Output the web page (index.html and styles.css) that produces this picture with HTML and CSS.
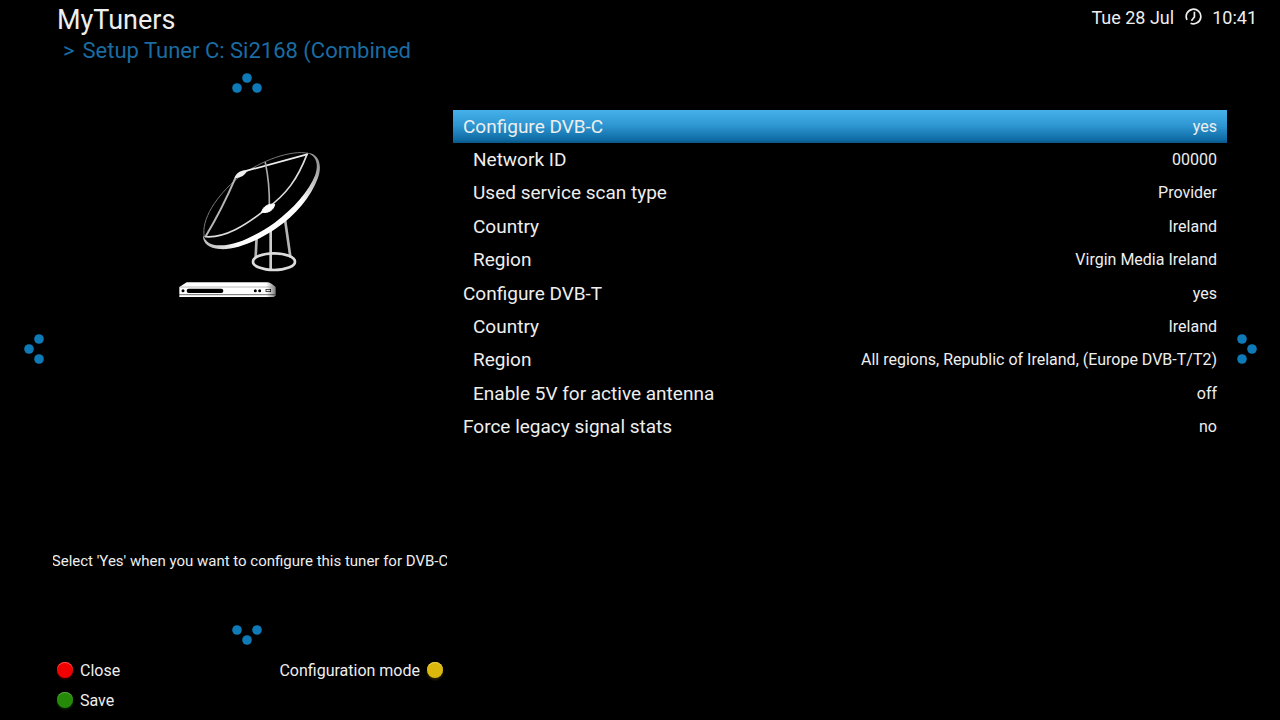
FILE: index.html
```html
<!doctype html>
<html lang="en">
<head>
    <meta charset="utf-8">
    <meta name="viewport" content="width=device-width, initial-scale=1">
    <title>MyTuners</title>
    <link rel="stylesheet" href="styles.css">
</head>

<body>
<div class="screen">
    <header class="header">
        <div class="titles">
            <h1>MyTuners</h1>
            <p class="subtitle"><span>&gt;</span><span>Setup Tuner C: Si2168 (Combined</span></p>
        </div>
        <div class="clock">
            <span>Tue 28 Jul</span>
            <svg width="18" height="18" viewBox="0 0 18 18" fill="none" stroke="#eee" stroke-width="1.7">
                <path d="M3 11.8A7.3 7.3 0 1 1 6.6 15.2"/>
                <path d="M10.4 3.8V9L7.4 12.8"/>
            </svg>
            <span>10:41</span>
        </div>
    </header>

    <main class="main">
        <div class="rail rail-left">
            <button type="button" class="arrow" aria-label="Left">
                <svg width="20" height="30" viewBox="0 0 20 30">
                    <circle cx="15" cy="5" r="4.8"/><circle cx="5" cy="15" r="4.8"/><circle cx="15" cy="25" r="4.8"/>
                </svg>
            </button>
        </div>

        <section class="info">
            <button type="button" class="arrow" aria-label="Up">
                <svg width="30" height="20" viewBox="0 0 30 20">
                    <circle cx="5" cy="15" r="4.8"/><circle cx="15" cy="5" r="4.8"/><circle cx="25" cy="15" r="4.8"/>
                </svg>
            </button>
            <!-- dish and receiver -->
            <svg class="dish" width="160" height="165" viewBox="0 0 480 495" fill="none" stroke-linecap="round">
                <defs>
                    <linearGradient id="rim" x1="100" y1="300" x2="450" y2="80" gradientUnits="userSpaceOnUse">
                        <stop offset="0" stop-color="#bbb"/>
                        <stop offset=".2" stop-color="#fff"/>
                        <stop offset=".75" stop-color="#fff"/>
                        <stop offset="1" stop-color="#999"/>
                    </linearGradient>
                    <linearGradient id="box" x1="28" y1="0" x2="318" y2="0" gradientUnits="userSpaceOnUse">
                        <stop offset="0" stop-color="#fff"/>
                        <stop offset=".9" stop-color="#fff"/>
                        <stop offset="1" stop-color="#777"/>
                    </linearGradient>
                </defs>
                <g stroke="#b5b5b5" stroke-width="8">
                    <path d="M260 290L257 350M345 238L361 350"/>
                    <path d="M302 268V388" stroke="#ccc"/>
                </g>
                <ellipse cx="312" cy="365" rx="63" ry="25" stroke="#ddd" stroke-width="8"/>
                <path d="M103 290C92 240 138 168 206 112C270 62 365 28 415 40" stroke="#777" stroke-width="3"/>
                <path d="M411 38C448 40 458 76 443 116C424 168 376 226 320 264C262 304 196 331 148 327C116 324 98 310 99 286C108 308 124 317 152 316C202 316 262 284 314 248C370 206 418 152 436 104C446 72 440 48 411 38Z" fill="url(#rim)"/>
                <path d="M106 290C164 295 225 258 290 206C350 162 382 118 411 43" stroke="#ddd" stroke-width="5"/>
                <path d="M108 287C138 238 166 184 198 110" stroke="#b5b5b5" stroke-width="6"/>
                <path d="M220 95L411 43" stroke="#eee" stroke-width="5"/>
                <path d="M286 68C295 110 299 150 298 200" stroke="#aaa" stroke-width="5"/>
                <path d="M194 114C198 98 214 90 230 92C228 104 212 114 194 114Z" fill="#eee"/>
                <path d="M275 217C278 199 296 190 314 193C312 210 294 221 275 217Z" fill="#fff" stroke="#fff" stroke-width="3"/>
                <path d="M28 441L50 427H292Q302 427 317 441V466L312 471H28Z" fill="url(#box)"/>
                <path d="M31 441H314" stroke="#999" stroke-width="2"/>
                <path d="M28 464H316" stroke="#222" stroke-width="2"/>
                <rect x="50" y="446" width="110" height="13" rx="6" fill="#000"/>
                <circle cx="39" cy="452" r="4.5" fill="#000"/>
                <circle cx="256" cy="452" r="4.5" fill="#000"/>
                <circle cx="269" cy="452" r="4.5" fill="#000"/>
                <rect x="288" y="448" width="14" height="7" stroke="#000" stroke-width="2"/>
            </svg>
            <p class="help"><span>Select 'Yes' when you want to configure this tuner for DVB-C</span></p>
            <button type="button" class="arrow" aria-label="Down">
                <svg width="30" height="20" viewBox="0 0 30 20">
                    <circle cx="5" cy="5" r="4.8"/><circle cx="15" cy="15" r="4.8"/><circle cx="25" cy="5" r="4.8"/>
                </svg>
            </button>
        </section>

        <section class="config">
            <table class="settings">
                <tr class="selected"><th scope="row">Configure DVB-C</th><td>yes</td></tr>
                <tr class="sub"><th scope="row">Network ID</th><td>00000</td></tr>
                <tr class="sub"><th scope="row">Used service scan type</th><td>Provider</td></tr>
                <tr class="sub"><th scope="row">Country</th><td>Ireland</td></tr>
                <tr class="sub"><th scope="row">Region</th><td>Virgin Media Ireland</td></tr>
                <tr><th scope="row">Configure DVB-T</th><td>yes</td></tr>
                <tr class="sub"><th scope="row">Country</th><td>Ireland</td></tr>
                <tr class="sub"><th scope="row">Region</th><td>All regions, Republic of Ireland, (Europe DVB-T/T2)</td></tr>
                <tr class="sub"><th scope="row">Enable 5V for active antenna</th><td>off</td></tr>
                <tr><th scope="row">Force legacy signal stats</th><td>no</td></tr>
            </table>
        </section>

        <div class="rail rail-right">
            <button type="button" class="arrow" aria-label="Right">
                <svg width="20" height="30" viewBox="0 0 20 30">
                    <circle cx="5" cy="5" r="4.8"/><circle cx="15" cy="15" r="4.8"/><circle cx="5" cy="25" r="4.8"/>
                </svg>
            </button>
        </div>
    </main>

    <footer class="footer">
        <div class="keys">
            <button type="button" class="key"><i class="dot red"></i>Close</button>
            <button type="button" class="key"><i class="dot green"></i>Save</button>
        </div>
        <div class="keys">
            <button type="button" class="key">Configuration mode<i class="dot yellow"></i></button>
        </div>
    </footer>
</div>
</body>

</html>
```
FILE: styles.css
```css
* {
    box-sizing: border-box;
}

body,
h1,
p {
    margin: 0;
    padding: 0;
}

body {
    background: #000;
    color: #eee;
    font-family: Roboto, "Liberation Sans", sans-serif;
}

button {
    padding: 0;
    border: 0;
    background: none;
    color: inherit;
    font: inherit;
    cursor: pointer;
}

svg {
    display: block;
}

.screen {
    display: flex;
    flex-direction: column;
    min-height: 100vh;
}

/* header */
.header {
    display: flex;
    justify-content: space-between;
    padding: 0 23px 0 57px;
}

.header h1 {
    font-size: 27px;
    font-weight: 400;
    line-height: 40px;
}

.subtitle {
    display: flex;
    gap: 8px;
    padding-left: 6px;
    color: #1a6ca3;
    font-size: 22px;
    line-height: 21px;
}

.clock {
    display: flex;
    align-items: center;
    gap: 10px;
    height: 34px;
    font-size: 18px;
}

/* main area */
.main {
    display: grid;
    grid-template-columns: 46px 401px 1fr 53px;
    flex: 1;
}

.rail {
    display: flex;
    align-items: center;
    padding-bottom: 8px;
}

.rail-left {
    justify-content: flex-end;
    padding-right: 2px;
}

.rail-right {
    padding-left: 10px;
}

.arrow {
    fill: #0f7ab8;
}

.info {
    display: flex;
    flex-direction: column;
    align-items: center;
    padding-top: 12px;
}

.dish {
    margin: 47px 0 0 7px;
}

.help {
    display: flex;
    justify-content: center;
    align-self: stretch;
    margin: auto 0 52px 7px;
    overflow: hidden;
    font-size: 15px;
    line-height: 24px;
    white-space: nowrap;
}

.config {
    padding: 49px 0 0 6px;
}

.settings {
    width: 100%;
    height: 334px;
    border-collapse: collapse;
}

.settings th,
.settings td {
    padding: 0 10px;
    font-weight: 400;
    line-height: 32px;
}

.settings th {
    font-size: 19px;
    text-align: left;
}

.settings td {
    font-size: 16px;
    text-align: right;
}

.settings .sub th {
    padding-left: 20px;
}

.settings .selected {
    background: linear-gradient(#46b0ea, #2f98d3 45%, #0f6ca5 90%, #0a5685);
}

/* colour keys */
.footer {
    display: flex;
    justify-content: space-between;
    width: 447px;
    padding: 10px 4px 5px 57px;
    font-size: 16px;
}

.key {
    display: flex;
    align-items: center;
    gap: 7px;
    height: 30px;
}

.dot {
    width: 16px;
    height: 16px;
    border-radius: 50%;
}

.red {
    background: #f00000;
    box-shadow: inset 0 1px #ff5050, 0 2px 2px #300000;
}

.green {
    background: #258a08;
    box-shadow: inset 0 1px #5aa542, 0 2px 2px #0a2002;
}

.yellow {
    background: #dcb80c;
    box-shadow: inset 0 1px #ecd050, 0 2px 2px #2c2402;
}
```
